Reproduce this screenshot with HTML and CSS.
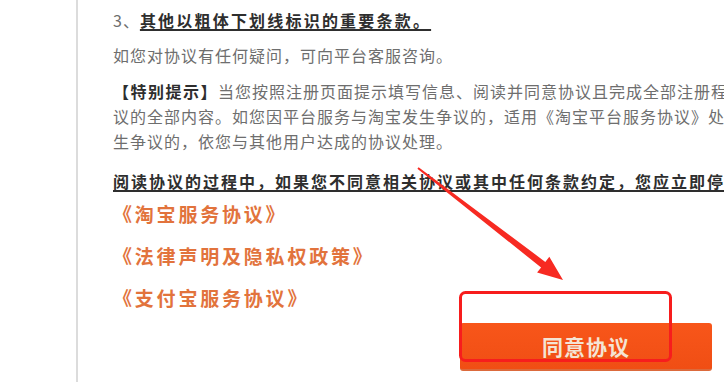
FILE: index.html
```html
<!DOCTYPE html>
<html lang="zh-CN">
<head>
  <meta charset="UTF-8">
  <meta name="viewport" content="width=device-width, initial-scale=1.0">
  <title>淘宝服务协议</title>
  <link rel="stylesheet" href="styles.css">
</head>
<body>
  <div id="agreement">
    <p class="line first">3、<b class="mark wide">其他以粗体下划线标识的重要条款。</b></p>
    <p class="line second">如您对协议有任何疑问，可向平台客服咨询。</p>
    <p class="tip"><b class="strong">【特别提示】</b>当您按照注册页面提示填写信息、阅读并同意协议且完成全部注册程<br>议的全部内容。如您因平台服务与淘宝发生争议的，适用《淘宝平台服务协议》处理<br>生争议的，依您与其他用户达成的协议处理。</p>
    <p class="line warn"><b class="mark">阅读协议的过程中，如果您不同意相关协议或其中任何条款约定，您应立即停</b></p>

    <ul id="links">
      <li><a href="#">《淘宝服务协议》</a></li>
      <li><a href="#">《法律声明及隐私权政策》</a></li>
      <li><a href="#">《支付宝服务协议》</a></li>
    </ul>

    <div id="actions">
      <button>同意协议</button>
    </div>
  </div>

  <!-- annotation drawn over the page -->
  <svg id="marker" width="724" height="382" viewBox="0 0 724 382">
    <polygon points="417.4,168.8 541.1,267.5 537.1,272.6 563,280 549.3,256.8 545.3,261.9 418.6,167.2" fill="#f72a22"/>
    <rect x="460.5" y="292.5" width="210" height="68" rx="5" fill="none" stroke="#f71d1d" stroke-width="3"/>
  </svg>
</body>
</html>
```

FILE: styles.css
```css
body {
  margin: 0;
  height: 382px;
  overflow: hidden;
  background-color: #fff;
  font-family: "Noto Sans CJK SC", "Liberation Sans", sans-serif;
  color: #6e6e6e;
}

#agreement {
  margin-left: 76px;
  width: 599px;
  padding: 8px 0 0 35px;
  border-left: 2px solid #dcdcdc;
  min-height: 374px;
}

p {
  margin: 0;
  font-size: 16px;
  letter-spacing: 1px;
  line-height: 25px;
  white-space: nowrap;
}

.second {
  margin-top: 10px;
}

.tip {
  margin-top: 11px;
}

.warn {
  margin-top: 15px;
}

.mark,
.strong {
  color: #2e2e2e;
  font-weight: bold;
  letter-spacing: 2px;
}

.mark {
  text-decoration: underline;
  text-decoration-thickness: 2px;
  text-underline-offset: 2px;
}

.wide {
  letter-spacing: 2.2px;
}

.strong {
  letter-spacing: 1.5px;
}

#links {
  list-style: none;
  margin: 5px 0 0;
  padding: 0;
}

#links li {
  margin-bottom: 11px;
  line-height: 30px;
}

#links li:last-child {
  margin-bottom: 9px;
}

#links a {
  color: #e2733c;
  font-size: 19px;
  font-weight: bold;
  letter-spacing: 2.8px;
  text-decoration: none;
}

#actions {
  display: flex;
  justify-content: flex-end;
}

button {
  width: 252px;
  height: 48px;
  padding: 0;
  border: none;
  border-bottom: 2px solid #dc6a3c;
  border-radius: 3px;
  background: linear-gradient(#f8561a, #f04e14);
  color: #f4e4d4;
  font-family: "Noto Sans CJK SC", sans-serif;
  font-size: 21px;
  font-weight: bold;
  letter-spacing: 1px;
}

#marker {
  position: absolute;
  top: 0;
  left: 0;
  pointer-events: none;
}
```
